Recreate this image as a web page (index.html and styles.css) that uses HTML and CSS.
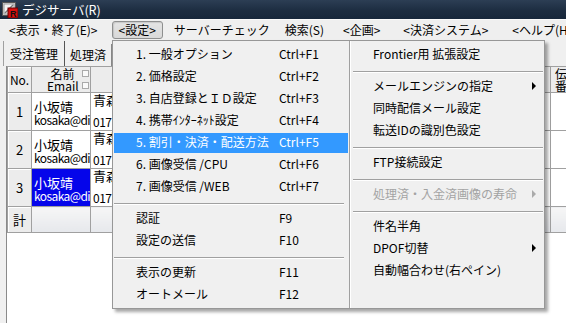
FILE: index.html
```html
<!DOCTYPE html>
<html>
    <head>
        <meta charset="utf-8">
        <link rel="stylesheet" href="styles.css">
    </head>
    <body>
        <div id="window">
            <div id="titleBar">
                <svg class="appIcon" width="16" height="16" viewBox="0 0 16 16">
                    <rect x="0.5" y="0.5" width="13" height="13" fill="#d8d8d8" stroke="#555"/>
                    <rect x="2" y="2" width="10" height="10" fill="#f4f4f4" stroke="#999"/>
                    <path d="M3 11 L11 3" stroke="#777" stroke-width="1.5"/>
                    <rect x="6" y="6" width="10" height="10" fill="#d81010" stroke="#600"/>
                    <text x="8" y="14.5" font-size="9" font-weight="bold" font-family="Liberation Sans" fill="#111">R</text>
                </svg>
                <span class="titleText">デジサーバ(R)</span>
            </div>

            <div id="menuBar">
                <span class="menuItem" id="mView">&lt;表示・終了(E)&gt;</span>
                <span class="menuItem open" id="mSet">&lt;設定&gt;</span>
                <span class="menuItem" id="mCheck">サーバーチェック</span>
                <span class="menuItem" id="mFind">検索(S)</span>
                <span class="menuItem" id="mPlan">&lt;企画&gt;</span>
                <span class="menuItem" id="mPay">&lt;決済システム&gt;</span>
                <span class="menuItem">&lt;ヘルプ(H)&gt;</span>
            </div>

            <div id="main">
                <div id="tabs">
                    <div class="tab current">受注管理</div>
                    <div class="tab">処理済</div>
                </div>
                <div id="grid">
                    <table>
                        <colgroup>
                            <col class="cNo">
                            <col class="cName">
                            <col class="cAddr">
                            <col class="cDen">
                        </colgroup>
                        <tr class="head">
                            <th class="fixed">No.</th>
                            <th>
                                <div class="nameHead">
                                    <div class="headText">名前<br>Email</div>
                                    <div class="checks"><i></i><i></i></div>
                                </div>
                            </th>
                            <th></th>
                            <th class="den">伝<br>番</th>
                        </tr>
                        <tr class="row">
                            <td class="fixed">1</td>
                            <td class="name">小坂靖<br><span class="mail">kosaka@die</span></td>
                            <td class="addr"><div>青森県</div><div class="tel">017</div></td>
                            <td></td>
                        </tr>
                        <tr class="row">
                            <td class="fixed">2</td>
                            <td class="name">小坂靖<br><span class="mail">kosaka@die</span></td>
                            <td class="addr"><div>青森県</div><div class="tel">017</div></td>
                            <td></td>
                        </tr>
                        <tr class="row">
                            <td class="fixed">3</td>
                            <td class="name picked">小坂靖<br><span class="mail">kosaka@die</span></td>
                            <td class="addr"><div>青森県</div><div class="tel">017</div></td>
                            <td></td>
                        </tr>
                        <tr class="sum">
                            <td class="fixed">計</td>
                            <td></td>
                            <td></td>
                            <td></td>
                        </tr>
                    </table>
                </div>
            </div>

            <div id="dropMenu">
                <div class="menuCol">
                    <div class="mi"><span class="lbl">1. 一般オプション</span><span>Ctrl+F1</span></div>
                    <div class="mi"><span class="lbl">2. 価格設定</span><span>Ctrl+F2</span></div>
                    <div class="mi"><span class="lbl">3. 自店登録とＩＤ設定</span><span>Ctrl+F3</span></div>
                    <div class="mi"><span class="lbl">4. 携帯ｲﾝﾀｰﾈｯﾄ設定</span><span>Ctrl+F4</span></div>
                    <div class="mi hot"><span class="lbl">5. 割引・決済・配送方法</span><span>Ctrl+F5</span></div>
                    <div class="mi"><span class="lbl">6. 画像受信 /CPU</span><span>Ctrl+F6</span></div>
                    <div class="mi"><span class="lbl">7. 画像受信 /WEB</span><span>Ctrl+F7</span></div>
                    <div class="sep"></div>
                    <div class="mi"><span class="lbl">認証</span><span>F9</span></div>
                    <div class="mi"><span class="lbl">設定の送信</span><span>F10</span></div>
                    <div class="sep"></div>
                    <div class="mi"><span class="lbl">表示の更新</span><span>F11</span></div>
                    <div class="mi"><span class="lbl">オートメール</span><span>F12</span></div>
                </div>
                <div class="menuCol right">
                    <div class="mi">Frontier用 拡張設定</div>
                    <div class="sep"></div>
                    <div class="mi">メールエンジンの指定<b class="arrow"></b></div>
                    <div class="mi">同時配信メール設定</div>
                    <div class="mi">転送IDの識別色設定</div>
                    <div class="sep"></div>
                    <div class="mi">FTP接続設定</div>
                    <div class="sep"></div>
                    <div class="mi off">処理済・入金済画像の寿命<b class="arrow"></b></div>
                    <div class="sep"></div>
                    <div class="mi">件名半角</div>
                    <div class="mi">DPOF切替<b class="arrow"></b></div>
                    <div class="mi">自動幅合わせ(右ペイン)</div>
                </div>
            </div>
        </div>
    </body>
</html>
```

FILE: styles.css
```css
body{
    margin:0px;
    padding:0px;
    font-family:"Noto Sans CJK JP", "Noto Sans", sans-serif;
    font-size:12px;
    background-color:#f0f0f0;
    overflow:hidden;
}

#window{
    position:relative;
    width:566px;
    height:323px;
    overflow:hidden;
}

/* title bar */
#titleBar{
    height:19px;
    display:flex;
    align-items:center;
    padding-left:2px;
    background:linear-gradient(180deg, #2c3e54 0%, #1d2d41 55%, #17273b 100%);
    color:white;
}
.appIcon{
    display:block;
}
.titleText{
    margin-left:4px;
    font-size:12.5px;
    line-height:19px;
}

/* menu bar */
#menuBar{
    height:20px;
    display:flex;
    align-items:center;
    border-top:1px solid #fafafa;
    background-color:#efefef;
}
.menuItem{
    padding:0px 6px;
    line-height:16px;
    white-space:nowrap;
    border:1px solid transparent;
}
#mView{ margin-left:2px; margin-right:7px; }
#mSet{ margin-right:4px; }
#mCheck{ margin-right:1px; }
#mFind{ margin-right:5px; }
#mPlan{ margin-right:9px; }
#mPay{ margin-right:10px; }
.menuItem.open{
    border-color:#8e8f8f;
    border-radius:3px;
    background:linear-gradient(180deg, #e4e4e4, #d9d9d9);
    box-shadow:inset 1px 1px 1px rgba(0,0,0,0.12);
}

/* tabs + grid */
#main{
    padding-left:5px;
}
#tabs{
    height:26px;
    display:flex;
    align-items:flex-end;
    margin-left:-2px;
}
.tab{
    height:22px;
    line-height:22px;
    padding:0px 5px;
    border-right:1px solid #888;
}
.tab.current{
    height:25px;
    line-height:25px;
    padding:0px 6px;
    border-left:1px solid #a0a0a0;
    border-right:1px solid #555;
}

#grid{
    height:260px;
    background-color:white;
    border-left:1px solid #8a8a8a;
    margin-left:1px;
}
#grid table{
    border-collapse:collapse;
    table-layout:fixed;
    width:600px;
    font-size:13px;
}
.cNo{ width:24px; }
.cName{ width:59px; }
.cAddr{ width:460px; }
.cDen{ width:57px; }

#grid th, #grid td{
    border:1px solid #a0a0a0;
    padding:0px;
    overflow:hidden;
    white-space:nowrap;
    font-weight:normal;
}
.head{
    height:26px;
}
.head th{
    background-color:#ececec;
    font-size:12px;
    line-height:12px;
}
.fixed{
    background-color:#ececec;
    text-align:center;
    box-shadow:inset 1px 1px 0px #fff;
}
.nameHead{
    display:flex;
    align-items:center;
    padding-left:15px;
}
.headText{
    width:31px;
    text-align:center;
}
.checks{
    margin-left:4px;
    display:flex;
    flex-direction:column;
    gap:5px;
}
.checks i{
    display:block;
    width:5px;
    height:5px;
    border:1px solid #aaa;
    background-color:#fafafa;
}
.den{
    text-align:left;
    padding-left:4px !important;
}

.row{
    height:38px;
}
#grid .row td{
    vertical-align:top;
}
#grid .row td.name{
    padding:7px 0px 0px 2px;
    line-height:13px;
}
.mail{
    font-size:12px;
    letter-spacing:-0.6px;
}
.name.picked{
    background-color:#0505ea;
    color:white;
}
#grid .row td.addr{
    padding:0px 0px 0px 2px;
    line-height:14px;
}
.addr .tel{
    margin-top:8px;
    font-size:12px;
    letter-spacing:-0.5px;
}
#grid .row td.fixed{
    vertical-align:middle;
}
.sum{
    height:26px;
}
#grid .sum td{
    background:linear-gradient(180deg, #f6f6f6, #e6e8ec);
}
#grid .sum td.fixed{
    background:#ececec;
}

/* the open drop-down of <設定> */
#dropMenu{
    position:absolute;
    left:112px;
    top:40px;
    display:flex;
    border:1px solid #979797;
    background-color:#f0f0f0;
    box-shadow:3px 3px 3px rgba(0,0,0,0.35);
    padding:2px 0px 3px 0px;
}
.menuCol{
    width:236px;
}
.menuCol.right{
    width:194px;
    margin:-2px 0px -3px;
    padding:2px 0px 3px;
    border-left:1px solid #a0a0a0;
    box-shadow:inset 1px 0px 0px #fff;
}
.mi{
    height:22px;
    line-height:22px;
    display:flex;
    align-items:center;
    margin:0px 1px;
    padding-left:22px;
    white-space:nowrap;
}
.mi .lbl{
    width:143px;
}
.mi.hot{
    background:linear-gradient(#3399ff, #3399ff) 0px 2px / 100% 20px no-repeat;
    color:white;
}
.right .mi{
    padding-left:22px;
    padding-right:7px;
}
.mi.off{
    color:#a3a3a3;
}
.arrow{
    margin-left:auto;
    width:0px;
    height:0px;
    border-left:4px solid #000;
    border-top:4px solid transparent;
    border-bottom:4px solid transparent;
}
.off .arrow{
    border-left-color:#aaa;
}
.sep{
    height:0px;
    border-top:1px solid #a0a0a0;
    border-bottom:1px solid #fff;
    margin:6px 5px 2px 1px;
}
.right .sep{
    margin:6px 1px 2px 3px;
}
```
